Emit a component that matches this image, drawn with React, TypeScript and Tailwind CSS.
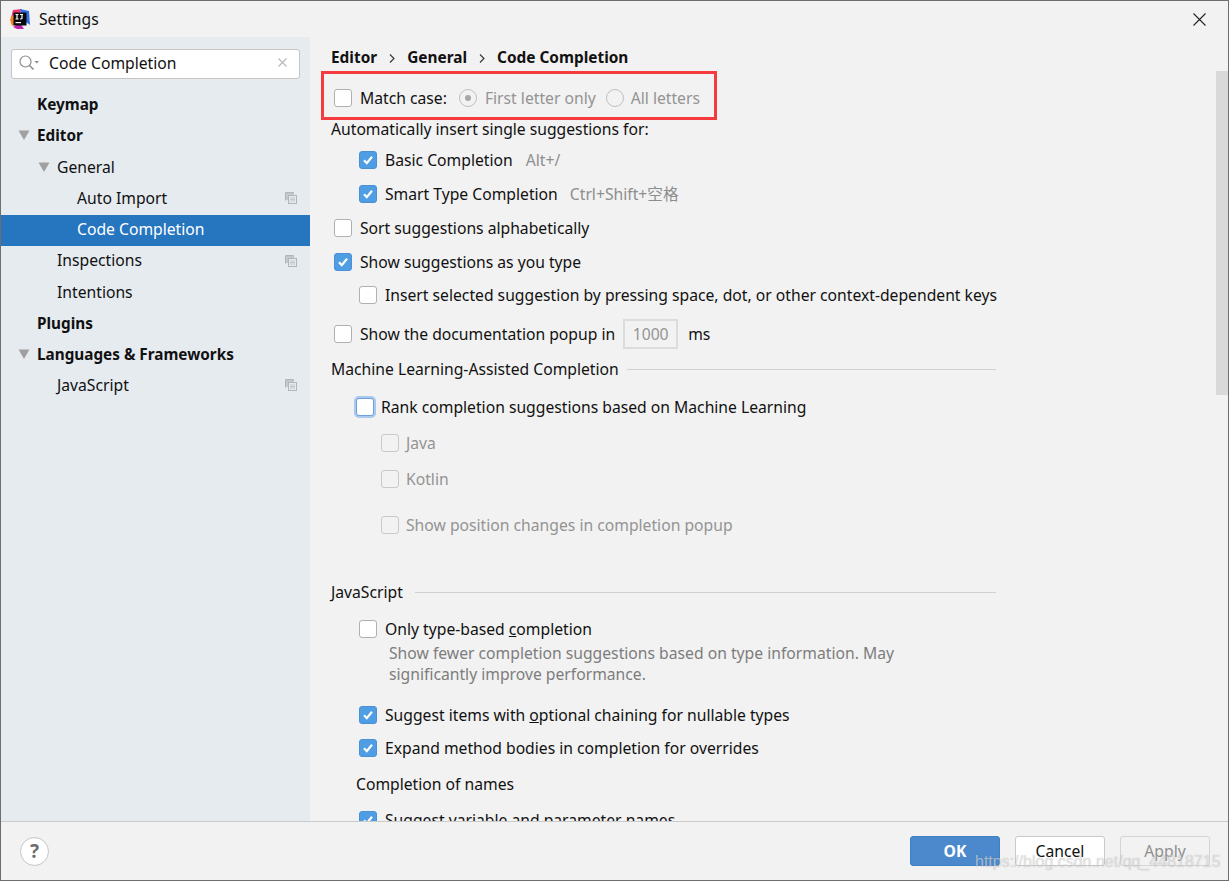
import React from "react";

const font = { fontFamily: '"Noto Sans", "Noto Sans CJK SC", sans-serif' };

function Check({ checked, disabled, focus }: { checked?: boolean; disabled?: boolean; focus?: boolean }) {
  if (checked)
    return (
      <span className="flex h-[18px] w-[18px] shrink-0 items-center justify-center rounded-[3px] border border-[#4a8fd8] bg-[#4f9ee3]">
        <svg width="12" height="12" viewBox="0 0 12 12" fill="none">
          <path d="M2 6.3 L4.8 9.2 L10 2.8" stroke="white" strokeWidth="2.2" />
        </svg>
      </span>
    );
  if (focus)
    return <span className="h-[18px] w-[18px] shrink-0 rounded-[3px] border border-[#6f9fdc] bg-white shadow-[0_0_0_2px_#a9c9ef]" />;
  return (
    <span
      className={
        disabled
          ? "h-[18px] w-[18px] shrink-0 rounded-[3px] border border-[#c9c9c9] bg-[#f2f2f2]"
          : "h-[18px] w-[18px] shrink-0 rounded-[3px] border border-[#b0b0b0] bg-white"
      }
    />
  );
}

function CopyIcon({ className }: { className: string }) {
  return (
    <svg className={className} width="12" height="12" viewBox="0 0 12 12" fill="none">
      <path d="M0.5 8.5V0.5H8.5V2.5" stroke="#afb6bb" />
      <rect x="1" y="1" width="7" height="7" fill="#c2c8cc" />
      <rect x="3.5" y="3.5" width="8" height="8" fill="#e6eaed" stroke="#afb6bb" />
      <path d="M5 6H10M5 7.5H10M5 9H10" stroke="#c2c8cc" />
    </svg>
  );
}

function Tri({ className }: { className: string }) {
  return (
    <svg className={className} width="12" height="10" viewBox="0 0 12 10">
      <path d="M0.5 0.5H11.5L6 10Z" fill="#a0a0a0" />
    </svg>
  );
}

function TreeRow({
  h,
  label,
  cls,
  tri,
  copy,
  selected,
}: {
  h: string;
  label: string;
  cls: string;
  tri?: string;
  copy?: boolean;
  selected?: boolean;
}) {
  return (
    <div className={`relative flex items-center ${h} ${selected ? "bg-[#2675bf] text-white" : "text-[#111111]"}`}>
      {tri && <Tri className={tri} />}
      <span className={cls}>{label}</span>
      {copy && <CopyIcon className="absolute right-[13px] top-[9px]" />}
    </div>
  );
}

function Row({
  h,
  indent,
  gap = "gap-[8px]",
  children,
}: {
  h: string;
  indent: string;
  gap?: string;
  children: React.ReactNode;
}) {
  return <div className={`flex items-center ${h} ${indent} ${gap}`}>{children}</div>;
}

function Section({ label, gap }: { label: string; gap: string }) {
  return (
    <div className={`flex h-full w-[665px] items-center ${gap}`}>
      <span>{label}</span>
      <span className="h-px flex-1 bg-[#d1d1d1]" />
    </div>
  );
}

export default function App() {
  return (
    <div
      className="relative flex h-[881px] w-[1229px] flex-col overflow-hidden border border-[#6e6e6e] bg-[#f2f2f2] text-[15.7px] leading-[18px] text-[#111111]"
      style={font}
    >
      {/* title bar */}
      <div className="flex h-[36px] shrink-0 items-center pl-[9px] pr-[22px]">
        <svg width="20" height="20" viewBox="0 0 20 20">
          <path d="M3 1 L12 0 L8 8 L1 9Z" fill="#f0326e" />
          <path d="M10 0 L19 2 L20 16 L12 10Z" fill="#2f6fe8" />
          <path d="M1 8 L5 5 L6 15 L2 17 L0 11Z" fill="#f5821f" />
          <path d="M3 18 L10 14 L14 20 L7 20Z" fill="#c020b0" />
          <rect x="3.5" y="3.5" width="13" height="13" fill="#0b0b0f" />
          <path d="M5.5 5.5H8.5M7 5.5V10M5.5 10H8.5M10 5.5H13M12 5.5V9.5Q12 10 10 10" stroke="white" strokeWidth="1.2" fill="none" />
          <rect x="5.5" y="13" width="5.5" height="1.2" fill="white" />
        </svg>
        <span className="ml-[9px]">Settings</span>
        <svg className="ml-auto" width="13" height="13" viewBox="0 0 13 13">
          <path d="M0.5 0.5L12.5 12.5M12.5 0.5L0.5 12.5" stroke="#222" strokeWidth="1.1" />
        </svg>
      </div>

      {/* middle */}
      <div className="flex min-h-0 flex-1">
        {/* sidebar */}
        <div className="w-[309px] shrink-0 bg-[#e6ebf0]">
          <div className="px-[10px] pt-[12px]">
            <div className="flex h-[30px] items-center rounded-[3px] border border-[#c4c4c4] bg-white pb-[3px] pl-[7px] pr-[12px]">
              <svg width="20" height="16" viewBox="0 0 20 16" fill="none">
                <circle cx="6.5" cy="6.5" r="5.5" stroke="#8b8b8b" strokeWidth="1.2" />
                <path d="M10.5 10.5L14.5 14.5" stroke="#8b8b8b" strokeWidth="1.6" />
                <path d="M15.5 6H20L17.7 8.5Z" fill="#8b8b8b" />
              </svg>
              <span className="ml-[10px]">Code Completion</span>
              <svg className="ml-auto" width="9" height="9" viewBox="0 0 9 9">
                <path d="M0.5 0.5L8.5 8.5M8.5 0.5L0.5 8.5" stroke="#b9b9b9" strokeWidth="1.2" />
              </svg>
            </div>
          </div>
          <div className="pt-[9px]">
            <TreeRow h="h-[31px]" label="Keymap" cls="ml-[36px] text-[15.3px] font-bold" />
            <TreeRow h="h-[31px]" label="Editor" cls="ml-[7px] text-[15.3px] font-bold" tri="ml-[17px]" />
            <TreeRow h="h-[33px]" label="General" cls="ml-[7px]" tri="ml-[37px]" />
            <TreeRow h="h-[32px] pb-[2px]" label="Auto Import" cls="ml-[76px]" copy />
            <TreeRow h="h-[31px] pb-[3px]" label="Code Completion" cls="ml-[76px]" selected />
            <TreeRow h="h-[31px] pb-[3px]" label="Inspections" cls="ml-[56px]" copy />
            <TreeRow h="h-[31px] pb-[1px]" label="Intentions" cls="ml-[56px]" />
            <TreeRow h="h-[31px] pb-[2px]" label="Plugins" cls="ml-[36px] text-[15.3px] font-bold" />
            <TreeRow h="h-[31px] pb-[2px]" label="Languages & Frameworks" cls="ml-[7px] text-[15.3px] font-bold" tri="ml-[17px]" />
            <TreeRow h="h-[31px] pb-[2px]" label="JavaScript" cls="ml-[56px]" copy />
          </div>
        </div>

        {/* content */}
        <div className="relative min-w-0 flex-1 overflow-hidden pl-[21px] pt-[5px]">
          <div className="flex h-[30px] items-center pt-[2px] text-[15.4px] font-bold">
            <span>Editor</span>
            <svg className="mx-[12px]" width="6" height="9" viewBox="0 0 6 9" fill="none">
              <path d="M1 0.5L5 4.5L1 8.5" stroke="#333" strokeWidth="1.1" />
            </svg>
            <span>General</span>
            <svg className="mx-[12px]" width="6" height="9" viewBox="0 0 6 9" fill="none">
              <path d="M1 0.5L5 4.5L1 8.5" stroke="#333" strokeWidth="1.1" />
            </svg>
            <span>Code Completion</span>
          </div>

          <Row h="h-[38px] mt-[7px]" indent="pl-[3px]">
            <Check />
            <span>Match case:</span>
            <span className="ml-[4px] flex h-[18px] w-[18px] items-center justify-center rounded-full border border-[#c0c0c0] bg-[#f2f2f2]">
              <span className="h-[6px] w-[6px] rounded-full bg-[#a8a8a8]" />
            </span>
            <span className="text-[#949494]">First letter only</span>
            <span className="ml-[2px] h-[18px] w-[18px] rounded-full border border-[#c0c0c0] bg-[#f2f2f2]" />
            <span className="ml-[-1px] text-[#949494]">All letters</span>
          </Row>
          <Row h="h-[24px]" indent="">
            <span>Automatically insert single suggestions for:</span>
          </Row>
          <Row h="h-[34px] mt-[2px]" indent="pl-[28px]">
            <Check checked />
            <span>Basic Completion</span>
            <span className="ml-[5px] text-[#8e8e8e]">Alt+/</span>
          </Row>
          <Row h="h-[34px]" indent="pl-[28px]">
            <Check checked />
            <span>Smart Type Completion</span>
            <span className="ml-[4px] text-[#8e8e8e]">Ctrl+Shift+空格</span>
          </Row>
          <Row h="h-[34px]" indent="pl-[3px]">
            <Check />
            <span>Sort suggestions alphabetically</span>
          </Row>
          <Row h="h-[34px]" indent="pl-[3px]">
            <Check checked />
            <span>Show suggestions as you type</span>
          </Row>
          <Row h="h-[32px]" indent="pl-[28px]">
            <Check />
            <span>Insert selected suggestion by pressing space, dot, or other context-dependent keys</span>
          </Row>
          <Row h="h-[46px]" indent="pl-[3px]">
            <Check />
            <span>Show the documentation popup in</span>
            <span className="flex h-[30px] w-[55px] items-center justify-center border-2 border-[#dcdcdc] text-[#949494]">1000</span>
            <span className="ml-[2px]">ms</span>
          </Row>
          <div className="h-[24px]">
            <Section label="Machine Learning-Assisted Completion" gap="gap-[8px]" />
          </div>
          <Row h="h-[40px] mt-[6px]" indent="pl-[25px]" gap="gap-[7px]">
            <Check focus />
            <span>Rank completion suggestions based on Machine Learning</span>
          </Row>
          <Row h="h-[32px]" indent="pl-[50px]" gap="gap-[7px]">
            <Check disabled />
            <span className="text-[#949494]">Java</span>
          </Row>
          <Row h="h-[36px] mt-[2px]" indent="pl-[50px]" gap="gap-[7px]">
            <Check disabled />
            <span className="text-[#949494]">Kotlin</span>
          </Row>
          <Row h="h-[56px]" indent="pl-[50px]" gap="gap-[7px]">
            <Check disabled />
            <span className="text-[#949494]">Show position changes in completion popup</span>
          </Row>
          <div className="mt-[20px] h-[38px]">
            <Section label="JavaScript" gap="gap-[12px]" />
          </div>
          <Row h="h-[26px] mt-[5px]" indent="pl-[28px]">
            <Check />
            <span>
              Only type-based <span className="underline">c</span>ompletion
            </span>
          </Row>
          <div className="mt-[1px] w-[575px] pl-[58px] leading-[21px] text-[#7d7d7d]">
            Show fewer completion suggestions based on type information. May significantly improve performance.
          </div>
          <Row h="h-[34px] mt-[13px]" indent="pl-[28px]">
            <Check checked />
            <span>
              Suggest items with <span className="underline">o</span>ptional chaining for nullable types
            </span>
          </Row>
          <Row h="h-[32px]" indent="pl-[28px]">
            <Check checked />
            <span>Expand method bodies in completion for overrides</span>
          </Row>
          <Row h="h-[40px]" indent="pl-[25px]">
            <span>Completion of names</span>
          </Row>
          <Row h="h-[32px]" indent="pl-[28px]">
            <Check checked />
            <span>Suggest variable and parameter names</span>
          </Row>

          {/* scrollbar */}
          <div className="absolute right-0 top-[34px] h-[324px] w-[12px] bg-[#d9d9d9]" />
        </div>
      </div>

      {/* footer */}
      <div className="relative flex h-[59px] shrink-0 items-center border-t border-[#cbcbcb] pl-[19px] pr-[18px]">
        <span className="flex h-[29px] w-[29px] items-center justify-center rounded-full border border-[#c4c4c4] bg-white text-[19px] font-bold text-[#6e6e6e]">
          ?
        </span>
        <span className="ml-auto flex h-[30px] w-[90px] items-center justify-center rounded-[3px] border border-[#3f7fc4] bg-[#4c89cc] font-bold text-white">
          OK
        </span>
        <span className="ml-[15px] flex h-[30px] w-[90px] items-center justify-center rounded-[3px] border border-[#c9c9c9] bg-white">
          Cancel
        </span>
        <span className="ml-[15px] flex h-[30px] w-[90px] items-center justify-center rounded-[3px] border border-[#d4d4d4] text-[#8e8e8e]">
          Apply
        </span>
      </div>

      {/* annotation */}
      <div className="absolute left-[320px] top-[70px] h-[49px] w-[396px] border-[3px] border-[#f63b3f]" />
      {/* watermark */}
      <div
        className="absolute left-[974px] top-[852px] text-[16px] text-white/55"
        style={{ fontFamily: '"Liberation Sans", sans-serif', textShadow: "0 0 1px rgba(0,0,0,0.3)" }}
      >
        https://blog.csdn.net/qq_44818715
      </div>
    </div>
  );
}
